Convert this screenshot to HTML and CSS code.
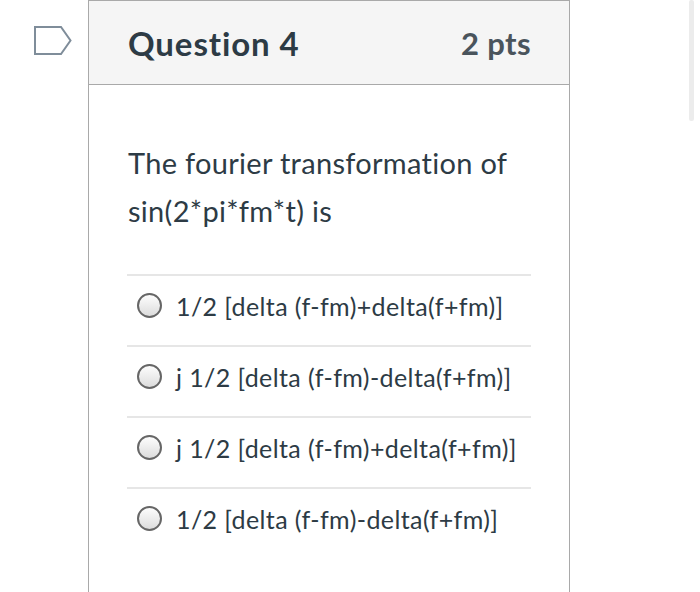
FILE: index.html
```html
<!DOCTYPE html>
<html>
<head>
<meta charset="utf-8">
<link rel="stylesheet" href="styles.css">
</head>
<body>
<div class="page">
  <div class="flag-col">
    <svg class="flag" width="40" height="32" viewBox="0 0 40 32">
      <path d="M1 1 H27 L36.5 14.5 L27 28 H1 Z" fill="none" stroke="#7f8d9a" stroke-width="2" stroke-linejoin="miter"/>
    </svg>
  </div>
  <div class="card">
    <div class="header">
      <span class="title">Question 4</span>
      <span class="pts">2 pts</span>
    </div>
    <div class="content">
      <p class="question">The fourier transformation of sin(2*pi*fm*t) is</p>
      <div class="answers">
        <div class="answer"><span class="radio"></span><span class="label">1/2 [delta (f-fm)+delta(f+fm)]</span></div>
        <div class="answer"><span class="radio"></span><span class="label">j 1/2 [delta (f-fm)-delta(f+fm)]</span></div>
        <div class="answer"><span class="radio"></span><span class="label">j 1/2 [delta (f-fm)+delta(f+fm)]</span></div>
        <div class="answer"><span class="radio"></span><span class="label">1/2 [delta (f-fm)-delta(f+fm)]</span></div>
      </div>
    </div>
  </div>
</div>
<div class="scrollbar"></div>
</body>
</html>
```
FILE: styles.css
```css
html, body {
  margin: 0;
  padding: 0;
  background: #fff;
}
body {
  width: 700px;
  height: 592px;
  overflow: hidden;
  position: relative;
  font-family: Lato, "Open Sans", sans-serif;
  color: #2d3b45;
}
.page {
  display: flex;
  padding-left: 34px;
}
.flag-col {
  width: 54px;
  flex: none;
}
.flag {
  display: block;
  margin-top: 26px;
}
.card {
  width: 480px;
  height: 640px;
  border: 1px solid #a9a9a9;
  border-bottom: none;
  flex: none;
}
.header {
  height: 83px;
  background: #f5f5f5;
  border-bottom: 1px solid #a9a9a9;
  display: flex;
  justify-content: space-between;
  align-items: center;
  padding: 0 38px 0 39px;
}
.title {
  font-size: 33px;
  font-weight: 700;
  letter-spacing: 0.9px;
}
.pts {
  font-size: 31px;
  font-weight: 700;
  letter-spacing: 0.4px;
  color: #4a545c;
}
.content {
  padding: 0 38px 0 38px;
}
.question {
  margin: 54px 0 39px 1px;
  font-size: 29px;
  line-height: 48px;
  letter-spacing: 0.3px;
  width: 404px;
}
.answer {
  border-top: 2px solid #e6e6e6;
  display: flex;
  align-items: center;
  padding-bottom: 10px;
  height: 59px;
}
.radio {
  width: 21px;
  height: 21px;
  border-radius: 50%;
  border: 2px solid #666;
  background: linear-gradient(#fdfdfd, #dcdcdc);
  margin-left: 10px;
  margin-right: 14px;
  flex: none;
}
.label {
  font-size: 25px;
  letter-spacing: 0.4px;
}
.scrollbar {
  position: absolute;
  left: 689px;
  top: 0;
  width: 5px;
  height: 121px;
  background: #ececec;
  border-radius: 2px;
}
```
